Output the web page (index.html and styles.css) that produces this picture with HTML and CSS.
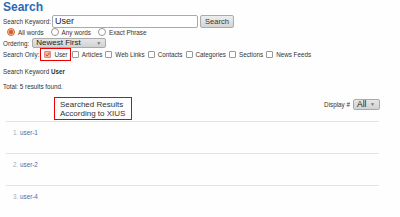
FILE: index.html
```html
<!DOCTYPE html>
<html lang="en">
<head>
    <meta charset="UTF-8">
    <title>Search</title>
    <link rel="stylesheet" href="styles.css">
</head>
<body>
    <div class="page">
        <h1 class="title">Search</h1>

        <div class="row keyword-row">
            <label>Search Keyword:</label>
            <div class="keyword-input">User</div>
            <span class="btn">Search</span>
        </div>

        <div class="row radio-row">
            <span class="radio on"></span><span class="opt">All words</span>
            <span class="radio"></span><span class="opt">Any words</span>
            <span class="radio"></span><span class="opt">Exact Phrase</span>
        </div>

        <div class="row order-row">
            <label>Ordering:</label>
            <div class="select order-select">
                <span>Newest First</span>
                <span class="arrow">&#9660;</span>
            </div>
        </div>

        <div class="row only-row">
            <label>Search Only:</label>
            <span class="highlight">
                <span class="check on">
                    <svg width="7" height="7" viewBox="0 0 7 7"><path d="M1 3.5 L3 5.5 L6.5 1" fill="none" stroke="#b33" stroke-width="1.2"/></svg>
                </span><span class="opt">User</span>
            </span>
            <span class="check"></span><span class="opt">Articles</span>
            <span class="check"></span><span class="opt">Web Links</span>
            <span class="check"></span><span class="opt">Contacts</span>
            <span class="check"></span><span class="opt">Categories</span>
            <span class="check"></span><span class="opt">Sections</span>
            <span class="check"></span><span class="opt">News Feeds</span>
        </div>

        <p class="summary">Search Keyword <b>User</b></p>
        <p class="summary total">Total: 5 results found.</p>

        <div class="results-head">
            <div class="note">Searched Results<br>According to XIUS</div>
            <div class="display">
                <span>Display #</span>
                <div class="select display-select">
                    <span>All</span>
                    <span class="arrow">&#9660;</span>
                </div>
            </div>
        </div>

        <ul class="results">
            <li><span class="num">1.</span> <a href="#">user-1</a></li>
            <li><span class="num">2.</span> <a href="#">user-2</a></li>
            <li><span class="num">3.</span> <a href="#">user-4</a></li>
        </ul>
    </div>
</body>
</html>
```

FILE: styles.css
```css
body {
    margin: 0;
    background-color: #fefefe;
    font-family: "Liberation Sans", Arial, sans-serif;
    font-size: 6.3px;
    color: #333;
}
.page {
    padding: 1px 3px 0 3px;
}
.title {
    margin: 0;
    font-size: 12px;
    font-weight: bold;
    color: #2a6ab4;
    line-height: 12px;
}
.row {
    display: flex;
    align-items: center;
    white-space: nowrap;
}
.row > * {
    flex-shrink: 0;
}
.keyword-row {
    margin-top: 2px;
    height: 13px;
}
.keyword-row label {
    margin-right: 1px;
}
.keyword-input {
    width: 142px;
    height: 11px;
    border: 1px solid #aaa;
    border-radius: 2px;
    background: white;
    font-size: 9px;
    line-height: 11px;
    padding-left: 2px;
    color: #222;
}
.btn {
    margin-left: 2px;
    width: 32px;
    height: 11px;
    border: 1px solid #aaa;
    border-radius: 2px;
    background: linear-gradient(#eee, #d4d4d4);
    font-size: 7.5px;
    line-height: 11px;
    text-align: center;
    color: #333;
}
.radio-row {
    height: 8px;
    padding-left: 4px;
}
.radio {
    width: 6px;
    height: 6px;
    border: 1px solid #999;
    border-radius: 50%;
    background: white;
    margin: 0 3px 0 7px;
}
.radio:first-child {
    margin-left: 0;
}
.radio.on {
    border-color: #c9663a;
    background: radial-gradient(#d95b2a 45%, #f3c4a8 55%);
}
.order-row {
    height: 10px;
    margin-top: 2px;
}
.order-row label {
    margin-right: 3px;
}
.select {
    display: flex;
    align-items: center;
    justify-content: space-between;
    height: 10px;
    border: 1px solid #aaa;
    border-radius: 2px;
    background: linear-gradient(#e6e6e6, #d2d2d2);
    padding: 0 4px 0 3px;
    box-sizing: border-box;
    color: #222;
    line-height: 1;
}
.order-select {
    width: 74px;
    font-size: 8px;
}
.arrow {
    font-size: 5px;
    color: #777;
}
.only-row {
    height: 13px;
}
.only-row label {
    margin-right: 1px;
}
.highlight {
    display: flex;
    align-items: center;
    height: 11px;
    border: 1px solid #e00;
    padding: 0 2px 0 3px;
}
.check {
    width: 5px;
    height: 5px;
    border: 1px solid #999;
    border-radius: 1px;
    background: white;
    margin: 0 3px 0 3px;
}
.highlight + .check {
    margin-left: 1px;
}
.check.on {
    margin-left: 0;
    border-color: #d88;
    background: #f5b58e;
    display: flex;
    align-items: center;
    justify-content: center;
}
.summary {
    margin: 0;
    margin-top: 6px;
    line-height: 10px;
}
.total {
    margin-top: 5px;
}
.results-head {
    display: flex;
    justify-content: space-between;
    align-items: flex-start;
    margin-top: 5px;
    width: 377px;
}
.note {
    margin-left: 51px;
    border: 1px solid #e00;
    padding: 2px 6px 1px 5px;
    font-size: 8px;
    line-height: 9px;
    color: #333;
    white-space: nowrap;
}
.display {
    display: flex;
    align-items: center;
    margin-top: 2px;
    gap: 3px;
}
.display-select {
    width: 27px;
    height: 11px;
    font-size: 8.5px;
}
.results {
    list-style: none;
    margin: 1px 0 0 3px;
    padding: 0;
    width: 373px;
}
.results li {
    border-top: 1px solid #e4e4e4;
    height: 31px;
    padding-left: 7px;
    line-height: 22px;
    color: #aaa;
}
.results a {
    color: #3b6fb8;
    text-decoration: none;
}
```
